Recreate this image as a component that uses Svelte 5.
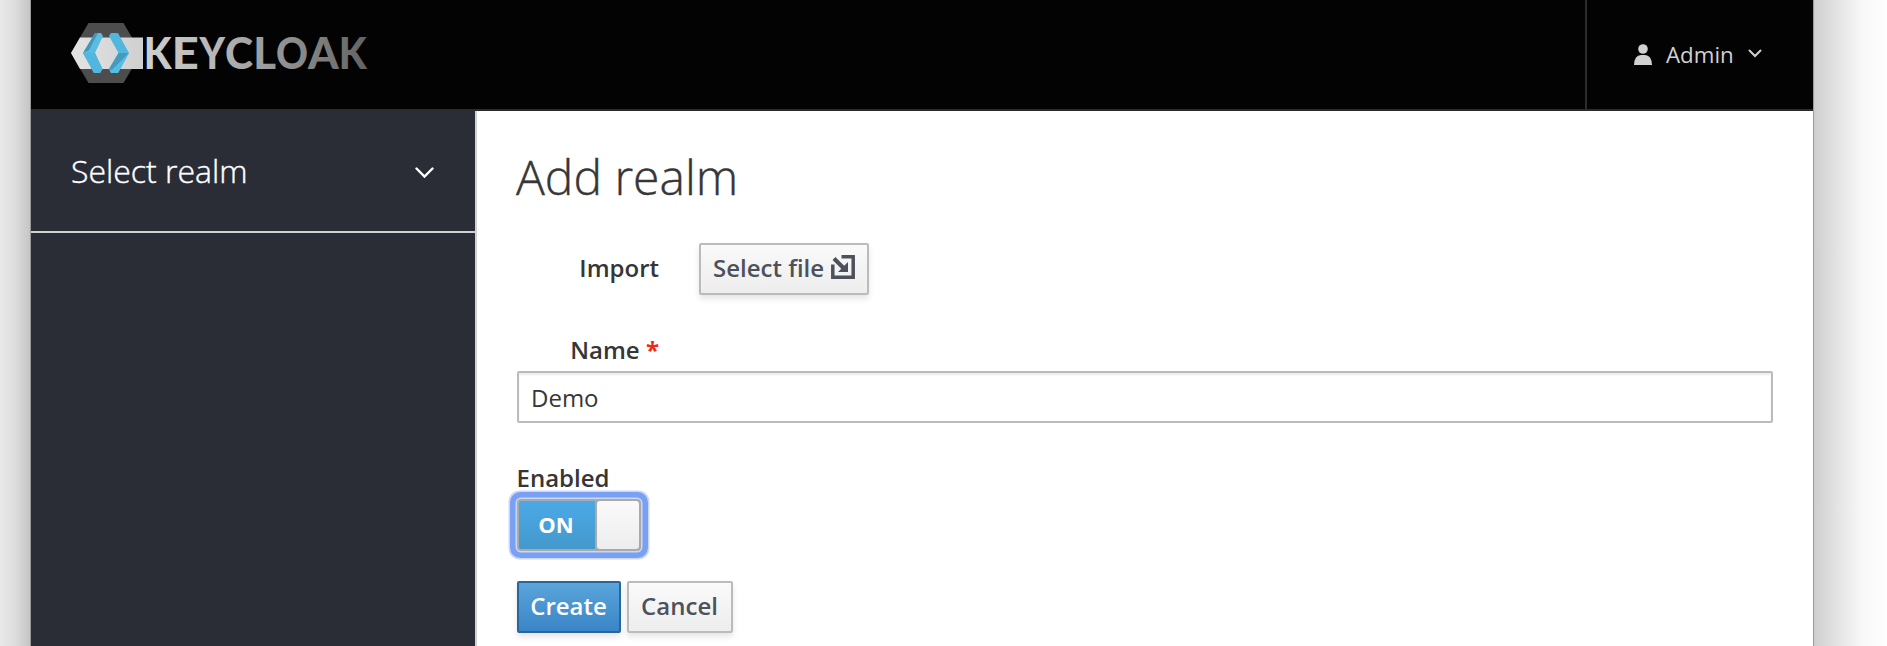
<script>
  let name = $state('Demo');
  let enabled = $state(true);
  const wordmark = [
    ['K', 143.8, 27.8], ['E', 171.8, 27], ['Y', 199.5, 25.5], ['C', 225, 28],
    ['L', 253.2, 22.8], ['O', 276, 32], ['A', 308, 30.7], ['K', 338.8, 28]
  ];
</script>

<div class="desktop">
  <div class="window">
    <header>
      <svg class="logo" viewBox="70 22 300 62" width="300" height="62" role="img" aria-label="Keycloak">
        <defs>
          <linearGradient id="silver" gradientUnits="userSpaceOnUse" x1="70" y1="0" x2="368" y2="0">
            <stop offset="0" stop-color="#e4e4e4" />
            <stop offset=".25" stop-color="#cfcfcf" />
            <stop offset=".5" stop-color="#b5b5b5" />
            <stop offset=".8" stop-color="#848484" />
            <stop offset="1" stop-color="#626262" />
          </linearGradient>
        </defs>
        <path d="M88.500 23H123.500L141 53L123.500 83H88.500L71 53Z" fill="#4d4d4d" />
        <path d="M80 37.500H143V69H80L71 53Z" fill="url(#silver)" />
        <path d="M95 33H101L103 36L95 53L102.500 69L100 73H94L83 53Z" fill="#5bbce2" />
        <path d="M95 33H98L89 50L83 53Z" fill="#4596b6" />
        <path d="M83 53L95 53L102.500 69L100 73H94Z" fill="#51b7df" />
        <path d="M111 33H118L129 53L118 73H111L109 69L118.500 53L109 36Z" fill="#51b7df" />
        <path d="M118.500 53L129 53L112 70L109 69Z" fill="#459bbd" />
        <path d="M129 53L118 73H111L110 70L112 70Z" fill="#55bce3" />
        {#each wordmark as [letter, x, width]}
          <text {x} y="68.500" textLength={width} lengthAdjust="spacingAndGlyphs" fill="url(#silver)">{letter}</text>
        {/each}
      </svg>
      <button class="account">
        <svg width="18" height="22" viewBox="0 0 18 22" fill="#d1d1d1">
          <circle cx="9" cy="5" r="4.800" />
          <path d="M0 21Q.5 11 7 11H11Q17.500 11 18 21Z" />
        </svg>
        <span>Admin</span>
        <svg class="caret" width="14" height="9" viewBox="0 0 14 9" fill="none" stroke="#d1d1d1" stroke-width="2"><path d="M1.500 1.500L7 7L12.500 1.500" stroke-linecap="round" /></svg>
      </button>
    </header>
    <div class="body">
      <nav>
        <button class="realm">
          <span>Select realm</span>
          <svg width="19" height="12" viewBox="0 0 19 12" fill="none" stroke="#fff" stroke-width="2.400"><path d="M1.500 1.500L9.500 9.500L17.500 1.500" stroke-linecap="round" /></svg>
        </button>
      </nav>
      <main>
        <h1>Add realm</h1>
        <div class="import">
          <span class="label">Import</span>
          <button class="btn file"><span>Select file</span>
            <svg width="24" height="24" viewBox="0 0 24 24" fill="none" stroke="#4d515b" stroke-width="3.500">
              <path d="M10.500 1.800H22.200V22.200H1.800V9.500" />
              <path d="M3 3.500L13 13.500" stroke-width="4" />
              <path d="M17 7V17H7Z" fill="#4d515b" stroke="none" />
            </svg>
          </button>
        </div>
        <label class="label name" for="realm-name">Name <em>*</em></label>
        <input id="realm-name" bind:value={name} />
        <span class="label enabled">Enabled</span>
        <button class="switch" aria-label="Enabled" onclick={() => (enabled = !enabled)}>
          <span class="state">{enabled ? 'ON' : 'OFF'}</span><span class="knob"></span>
        </button>
        <div class="actions">
          <button class="btn primary">Create</button>
          <button class="btn cancel">Cancel</button>
        </div>
      </main>
    </div>
  </div>
</div>

<style>
  :global(body) { margin: 0; overflow: hidden; }
  * { box-sizing: border-box; }
  .desktop {
    height: 646px;
    padding: 0 74px 0 31px;
    font: 24px/40px "Open Sans", sans-serif;
    background:
      linear-gradient(90deg, #e9e9e9, #dedede 14px, #c4c4c4 31px, transparent 31px),
      linear-gradient(270deg, #fefefe, #f8f8f8 24px, #e7e7e7 46px, #cecece 73px);
    overflow: hidden;
  }
  .window {
    height: 100%;
    display: flex;
    flex-direction: column;
    background: #fff;
    box-shadow: 0 0 0 1px #999;
  }
  button { font: inherit; margin: 0; cursor: pointer; }
  header {
    flex: 0 0 111px;
    display: flex;
    justify-content: space-between;
    background: #030303;
    border-bottom: 2px solid #2b2b2b;
  }
  .logo { display: block; margin: 22px 0 0 39px; }
  .logo text { font: 900 43px Lato, sans-serif; }
  .account {
    width: 228px;
    display: flex;
    align-items: center;
    padding: 0 0 0 47px;
    background: none;
    border: 0;
    border-left: 2px solid #2b2b2b;
    color: #d1d1d1;
    font-size: 22px;
  }
  .account span { margin: 0 0 0 14px; width: 67px; text-align: left; font-size: 22.3px; }
  .caret { margin: -2px 0 0 15px; }
  .body { flex: 1; display: flex; min-height: 0; }
  nav {
    flex: 0 0 446px;
    background: #2a2d35;
    border-right: 2px solid #d1d1d1;
  }
  .realm {
    width: 100%;
    height: 122px;
    padding: 0 41px 0 40px;
    display: flex;
    align-items: center;
    justify-content: space-between;
    background: #2b2d36;
    border: 0;
    border-bottom: 2px solid #d1d1d1;
    color: #fff;
    font-size: 32px;
    font-weight: 300;
    -webkit-text-stroke: .4px #fff;
  }
  .realm svg { margin-top: 3px; }
  main {
    flex: 1;
    display: flex;
    flex-direction: column;
    align-items: flex-start;
    padding: 35px 40px 0;
    color: #363636;
  }
  h1 { margin: 0 0 0 -1px; height: 97px; font-size: 48px; line-height: 62px; font-weight: 300; -webkit-text-stroke: .4px #363636; }
  .label { font-weight: 600; white-space: nowrap; }
  .import { display: flex; align-items: center; gap: 40px; }
  .import .label, .name { width: 142px; text-align: right; }
  .import .label { margin-top: -2px; }
  .name { margin-top: 35px; height: 41px; }
  em { color: #ef2b17; font-style: normal; font-weight: 700; }
  input {
    width: 100%;
    height: 52px;
    padding: 0 12px;
    border: 2px solid #bbb;
    border-radius: 2px;
    outline: 0;
    box-shadow: inset 0 2px 2px rgba(3, 3, 3, .075);
    color: #363636;
    font: inherit;
  }
  .enabled { margin: 35px 0 0 -.5px; height: 41px; }
  .btn {
    height: 52px;
    padding: 0 0 2px;
    display: flex;
    align-items: center;
    justify-content: center;
    border: 2px solid #bbb;
    border-radius: 2px;
    background: linear-gradient(#fafafa, #ededed);
    box-shadow: 0 4px 6px rgba(3, 3, 3, .1);
    color: #4d515b;
    font-weight: 600;
    line-height: 46px;
    white-space: nowrap;
  }
  .file { width: 170px; justify-content: flex-start; padding-left: 12px; }
  .file svg { margin: -2px 0 0 7px; flex: none; }
  .switch {
    width: 124px;
    height: 52px;
    padding: 0;
    display: flex;
    border: 2px solid #aaa;
    border-radius: 4px;
    background: #aaa;
    box-shadow: 0 0 0 1.500px #c8d8fb, 0 0 0 7px #7aa0f4, 0 0 0 8.500px #c8d8fb;
  }
  .state {
    flex: 0 0 76px;
    height: 48px;
    line-height: 46px;
    text-align: center;
    background: linear-gradient(#4ba9e8, #4499cb);
    border-radius: 2px 0 0 2px;
    color: #fff;
    font-size: 22px;
    font-weight: 700;
    text-indent: -2px;
  }
  .knob { width: 42px; height: 48px; margin-left: 2px; border-radius: 3px; background: linear-gradient(#fafafa, #ededed); }
  .actions { display: flex; gap: 6px; margin-top: 30px; }
  .primary { width: 104px; padding-right: 1px; background: linear-gradient(#5ba5db, #3985c7); border-color: #2b669a; color: #fff; }
  .cancel { width: 106px; padding-right: 1px; }
</style>
